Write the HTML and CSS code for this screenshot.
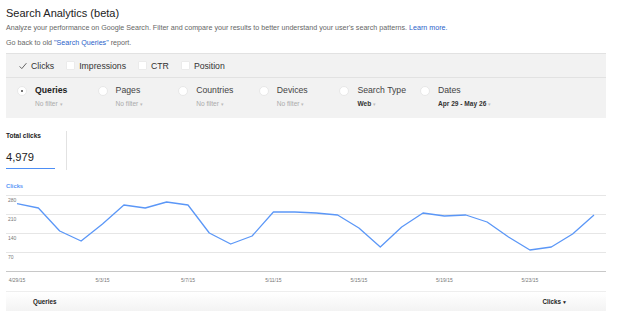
FILE: index.html
```html
<!DOCTYPE html>
<html lang="en">
<head>
    <meta charset="UTF-8">
    <meta name="viewport" content="width=device-width, initial-scale=1.0">
    <title>Search Analytics (beta)</title>
    <link rel="stylesheet" href="styles.css">
</head>
<body>
    <div class="page">
        <h1 class="title">Search Analytics (beta)</h1>
        <p class="intro">Analyze your performance on Google Search. Filter and compare your results to better understand your user's search patterns. <a href="#">Learn more.</a></p>
        <p class="back">Go back to old <a href="#">"Search Queries"</a> report.</p>

        <div class="filters">
            <div class="metrics">
                <label class="metric">
                    <svg class="tick" width="8" height="8" viewBox="0 0 8 8"><path d="M0.6 4.4 L2.8 6.6 L7.4 1.2" fill="none" stroke="#555" stroke-width="0.9"/></svg>
                    Clicks
                </label>
                <label class="metric"><span class="box"></span>Impressions</label>
                <label class="metric"><span class="box"></span>CTR</label>
                <label class="metric"><span class="box"></span>Position</label>
            </div>

            <div class="dims">
                <div class="dim">
                    <span class="radio checked"></span>
                    <div>
                        <div class="dim-name active">Queries</div>
                        <div class="dim-sub">No filter <span class="caret">&#9662;</span></div>
                    </div>
                </div>
                <div class="dim">
                    <span class="radio"></span>
                    <div>
                        <div class="dim-name">Pages</div>
                        <div class="dim-sub">No filter <span class="caret">&#9662;</span></div>
                    </div>
                </div>
                <div class="dim">
                    <span class="radio"></span>
                    <div>
                        <div class="dim-name">Countries</div>
                        <div class="dim-sub">No filter <span class="caret">&#9662;</span></div>
                    </div>
                </div>
                <div class="dim">
                    <span class="radio"></span>
                    <div>
                        <div class="dim-name">Devices</div>
                        <div class="dim-sub">No filter <span class="caret">&#9662;</span></div>
                    </div>
                </div>
                <div class="dim">
                    <span class="radio"></span>
                    <div>
                        <div class="dim-name">Search Type</div>
                        <div class="dim-sub set">Web <span class="caret">&#9662;</span></div>
                    </div>
                </div>
                <div class="dim">
                    <span class="radio"></span>
                    <div>
                        <div class="dim-name">Dates</div>
                        <div class="dim-sub set">Apr 29 - May 26 <span class="caret">&#9662;</span></div>
                    </div>
                </div>
            </div>
        </div>

        <div class="totals">
            <div class="total">
                <div class="total-label">Total clicks</div>
                <div class="total-value">4,979</div>
            </div>
        </div>

        <div class="chart-label">Clicks</div>
        <svg class="chart" width="600" height="96" viewBox="0 0 600 96">
            <g stroke="#e6e6e6" stroke-width="1">
                <line x1="0" y1="5.5" x2="600" y2="5.5"/>
                <line x1="0" y1="24.5" x2="600" y2="24.5"/>
                <line x1="0" y1="43.5" x2="600" y2="43.5"/>
                <line x1="0" y1="62.5" x2="600" y2="62.5"/>
            </g>
            <line x1="0" y1="81.5" x2="600" y2="81.5" stroke="#c8c8c8" stroke-width="1"/>
            <g class="axis-y">
                <text x="2" y="12">280</text>
                <text x="2" y="31">210</text>
                <text x="2" y="50">140</text>
                <text x="2" y="69">70</text>
            </g>
            <g class="axis-x" text-anchor="middle">
                <text x="11" y="92">4/29/15</text>
                <text x="96.5" y="92">5/3/15</text>
                <text x="182" y="92">5/7/15</text>
                <text x="267.4" y="92">5/11/15</text>
                <text x="352.9" y="92">5/15/15</text>
                <text x="438.4" y="92">5/19/15</text>
                <text x="523.9" y="92">5/23/15</text>
            </g>
            <polyline fill="none" stroke="#5b97f7" stroke-width="1.3" stroke-linejoin="round"
                points="11,13.7 32.4,18 53.7,41 75.1,51 96.5,34 117.9,15 139.2,18 160.6,12 182,15 203.3,43 224.7,54 246.1,46 267.4,22 288.8,22 310.2,23 331.6,25 352.9,38 374.3,57 395.7,37 417,23 438.4,26 459.8,25 481.1,32 502.5,47 523.9,60 545.3,57 566.6,44 588,25"/>
        </svg>

        <div class="table-head">
            <span>Queries</span>
            <span>Clicks<span class="sort">&#9660;</span></span>
        </div>
    </div>
</body>
</html>
```

FILE: styles.css
```css
body {
    margin: 0;
    font-family: "Liberation Sans", Arial, sans-serif;
    color: #333;
    background: #fff;
}

.page {
    width: 600px;
    padding: 6px 14px 0 6px;
}

.title {
    margin: 0;
    font-size: 11px;
    line-height: 14px;
    font-weight: normal;
    color: #222;
}

.intro, .back {
    margin: 3px 0 0;
    font-size: 7.15px;
    line-height: 10px;
    color: #666;
}

.back {
    margin-top: 5px;
}

a {
    color: #2a62c9;
    text-decoration: none;
}

.filters {
    margin-top: 5px;
    background: #f2f2f2;
    border-top: 1px solid #e2e2e2;
}

.metrics {
    display: flex;
    align-items: center;
    gap: 12px;
    height: 23px;
    padding-left: 13px;
    border-bottom: 1px solid #e2e2e2;
    font-size: 8.7px;
}

.metric {
    display: flex;
    align-items: center;
    gap: 4px;
}

.box {
    width: 7px;
    height: 7px;
    background: #fff;
    border: 1px solid #ebebeb;
    border-radius: 1px;
}

.dims {
    display: grid;
    grid-template-columns: repeat(6, 80.6px);
    height: 40px;
    padding: 6px 0 0 11px;
    box-sizing: border-box;
}

.dim {
    display: flex;
    align-items: flex-start;
    gap: 8px;
}

.radio {
    position: relative;
    width: 8px;
    height: 8px;
    margin-top: 2px;
    border-radius: 50%;
    background: #fff;
    border: 1px solid #e8e8e8;
    flex: none;
}

.radio.checked::after {
    content: "";
    position: absolute;
    left: 3px;
    top: 3px;
    width: 2px;
    height: 2px;
    border-radius: 50%;
    background: #444;
}

.dim-name {
    font-size: 8.7px;
    line-height: 12px;
    color: #444;
}

.dim-name.active {
    font-weight: bold;
    color: #222;
}

.dim-sub {
    margin-top: 3px;
    font-size: 6.6px;
    line-height: 10px;
    color: #aaa;
}

.dim-sub.set {
    font-weight: bold;
    color: #333;
}

.caret {
    font-size: 5px;
    color: #bbb;
    font-weight: normal;
}

.totals {
    margin-top: 13px;
}

.total {
    width: 60px;
    border-right: 1px solid #e2e2e2;
    padding-bottom: 1px;
}

.total-label {
    font-size: 6.5px;
    line-height: 9px;
    font-weight: bold;
    color: #222;
}

.total-value {
    width: 49px;
    margin-top: 10px;
    padding-bottom: 4px;
    font-size: 11.2px;
    line-height: 14px;
    color: #222;
    border-bottom: 1.5px solid #4d8ef5;
}

.chart-label {
    margin-top: 12px;
    font-size: 5.8px;
    line-height: 8px;
    font-weight: bold;
    color: #5b97f7;
}

.chart {
    display: block;
}

.chart text {
    font-family: "Liberation Sans", Arial, sans-serif;
    font-size: 5px;
    fill: #777;
}

.table-head {
    display: flex;
    justify-content: space-between;
    align-items: center;
    height: 19px;
    margin-top: 5px;
    padding: 0 39px 0 27px;
    border-top: 1px solid #eee;
    background: linear-gradient(#fff, #f3f3f3);
    font-size: 6.3px;
    font-weight: bold;
    color: #222;
}

.sort {
    font-size: 5px;
    margin-left: 1px;
}
```
